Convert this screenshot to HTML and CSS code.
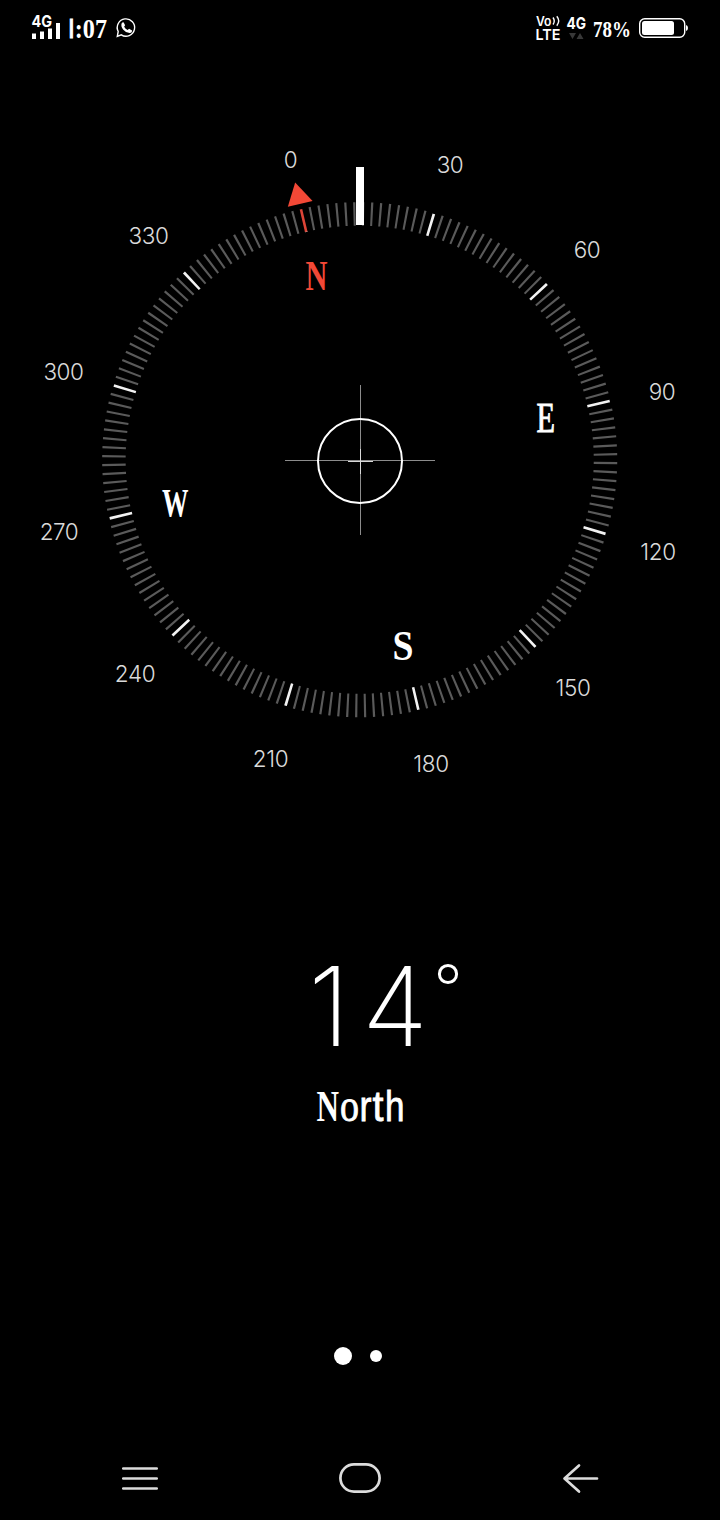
FILE: index.html
```html
<!DOCTYPE html>
<html lang="en">
<head>
<meta charset="utf-8">
<title>Compass</title>
<link rel="stylesheet" href="styles.css">
</head>
<body>
<div class="screen">
  <header class="status">
    <svg class="status-left" width="130" height="50" viewBox="20 0 130 50">
      <text class="net" x="31.500" y="27" textLength="20.500" lengthAdjust="spacingAndGlyphs">4G</text>
      <path class="solid" d="M32 33.500h4V39h-4zM40 31.500h4V39h-4zM48 28.500h4V39h-4zM56 23h4V39h-4z"/>
      <text class="clock" x="68" y="38" textLength="39" lengthAdjust="spacingAndGlyphs"><tspan class="clock-one">I</tspan>:07</text>
      <path class="thin" d="M118.200 31.500A8.700 8.700 0 1 1 121.300 34.900L117.300 36.400Z"/>
      <path class="solid" d="M121.700 23.200q1-1.300 2-.7l1.400 2.800-1 1.500q1.300 2.200 3.500 3.200l1.500-1.300 3 1.700q.2 2-2 2.600-3.700.3-6.800-3.300-2.800-3.300-1.600-6.500Z"/>
    </svg>
    <svg class="status-right" width="190" height="50" viewBox="520 0 190 50">
      <text class="volte" x="536" y="25.500" font-size="13" textLength="15.500" lengthAdjust="spacingAndGlyphs">Vo</text>
      <path class="wave" d="M553 17.500q2.500 3.500 0 7M556.800 16.300q3.800 4.700 0 9.400"/>
      <text class="volte" x="535.500" y="39.500" font-size="15" textLength="25" lengthAdjust="spacingAndGlyphs">LTE</text>
      <text class="net" x="566.500" y="29" textLength="19.500" lengthAdjust="spacingAndGlyphs">4G</text>
      <path class="dim" d="M569 33h7l-3.500 6zM576.500 39h7l-3.500-6z"/>
      <text class="battery-text" x="593" y="37" textLength="38" lengthAdjust="spacingAndGlyphs">78%</text>
      <rect class="outline" x="639.700" y="18.700" width="45" height="18.600" rx="5"/>
      <rect class="solid" x="642" y="21" width="32" height="14" rx="2.500"/>
      <path class="solid" d="M686 25q2 .5 2 3t-2 3z"/>
    </svg>
  </header>
  <main class="main">
    <svg class="dial" width="720" height="720" viewBox="0 100 720 720">
      <g transform="rotate(-13.200 359.700 459.700)">
        <g transform="rotate(-90 359.700 459.700)">
          <circle class="minor" cx="359.700" cy="459.700" r="245.800" pathLength="180"/>
          <circle class="major-gap" cx="359.700" cy="459.700" r="245.800" pathLength="12"/>
          <circle class="major" cx="359.700" cy="459.700" r="245.300" pathLength="12"/>
        </g>
        <path class="north-gap" d="M359.700 201v24"/>
        <path class="north-tick" d="M359.700 202.500v23"/>
        <path class="red" d="M360.200 175l12.700 22h-25.400z"/>
      </g>
      <rect class="solid" x="356" y="167" width="8" height="58"/>
      <g class="degrees">
        <text x="290.500" y="168">0</text><text x="450" y="173">30</text>
        <text x="587" y="258">60</text><text x="662" y="400">90</text>
        <text x="658" y="560">120</text><text x="573" y="696">150</text>
        <text x="431" y="772">180</text><text x="270.500" y="767">210</text>
        <text x="135" y="682">240</text><text x="59" y="540">270</text>
        <text x="63.500" y="380">300</text><text x="148.500" y="244">330</text>
      </g>
      <g class="cardinals">
        <text class="red" x="305.500" y="290" textLength="22" lengthAdjust="spacingAndGlyphs">N</text>
        <text class="light" x="536.500" y="432" textLength="18.500" lengthAdjust="spacingAndGlyphs">E</text>
        <text x="392.500" y="660" textLength="21" lengthAdjust="spacingAndGlyphs">S</text>
        <text x="162" y="516" font-size="40" textLength="26.500" lengthAdjust="spacingAndGlyphs">W</text>
      </g>
      <path class="cross" d="M285 460.500h150M360.500 385v150"/>
      <path class="cross-center" d="M348 461.500h25M360.500 449v25"/>
      <circle class="ring" cx="360" cy="461" r="42"/>
    </svg>
    <svg class="reading" width="720" height="220" viewBox="0 930 720 220">
      <text class="value" x="308" y="1045.500">1</text>
      <text class="value" x="362" y="1045.500" textLength="66" lengthAdjust="spacingAndGlyphs">4</text>
      <circle class="degree" cx="448" cy="974" r="8.600"/>
      <g class="heading">
        <text class="serif" x="316.500" y="1121" font-size="45" textLength="22.500" lengthAdjust="spacingAndGlyphs">N</text>
        <text class="serif round" x="340" y="1121" textLength="19" lengthAdjust="spacingAndGlyphs">o</text>
        <text x="359.500" y="1121" textLength="12" lengthAdjust="spacingAndGlyphs">r</text>
        <text x="372.500" y="1121" textLength="11" lengthAdjust="spacingAndGlyphs">t</text>
        <text x="385" y="1121" textLength="19.500" lengthAdjust="spacingAndGlyphs">h</text>
      </g>
    </svg>
    <div class="pager"><span class="dot active"></span><span class="dot"></span></div>
  </main>
  <nav class="nav">
    <svg width="44" height="36" viewBox="118 1460 44 36"><path d="M123.300 1468.500h33.400M123.300 1478.500h33.400M123.300 1488.500h33.400"/></svg>
    <svg width="44" height="36" viewBox="338 1460 44 36"><rect x="340.400" y="1464.400" width="39.200" height="27.200" rx="13.600"/></svg>
    <svg width="44" height="36" viewBox="558 1460 44 36"><path d="M579 1465.500l-14.500 13 14.500 13M565 1478.500h32"/></svg>
  </nav>
</div>
</body>
</html>
```
FILE: styles.css
```css
body {
  margin: 0;
  background: #000;
}
.screen {
  display: flex;
  flex-direction: column;
  width: 720px;
  height: 1520px;
  background: #000;
  color: #fff;
}
svg { display: block; }
text { fill: #fff; }
.solid { fill: #fff; }
.status {
  display: flex;
  justify-content: space-between;
  height: 50px;
  padding: 0 10px 50px 20px;
}
.net { font: 700 16px "Inter", "Liberation Sans", sans-serif; }
.volte { font-family: "Inter", "Liberation Sans", sans-serif; font-weight: 600; }
.clock { font: 700 28px "Liberation Serif", serif; }
.clock-one { font-family: "Liberation Sans", sans-serif; font-weight: 400; stroke: #fff; stroke-width: 1; }
.battery-text { font: 700 23px "Liberation Serif", serif; }
.thin, .wave { fill: none; stroke: #fff; stroke-width: 1.4; }
.outline { fill: none; stroke: #fff; stroke-width: 1.4; }
.dim { fill: #383838; }
.main {
  display: flex;
  flex-direction: column;
  height: 1340px;
}
.reading { margin-top: 110px; }
.minor, .major, .major-gap { fill: none; stroke-width: 23.5; }
.minor {
  stroke: #5a5a5a;
  stroke-dasharray: .25 .75;
  stroke-dashoffset: .125;
}
.major-gap {
  stroke: #000;
  stroke-dasharray: .03 .97;
  stroke-dashoffset: .015;
  stroke-width: 25;
}
.major {
  stroke: #f2f2f2;
  stroke-width: 23;
  stroke-dasharray: .0205 .9795;
  stroke-dashoffset: .01025;
}
.north-gap { stroke: #000; stroke-width: 5; }
.north-tick { stroke: #dc4437; stroke-width: 2.6; }
.red, .cardinals .red { fill: #f24836; }
.degrees text {
  font: 300 22.5px "Inter", "Liberation Sans", sans-serif;
  letter-spacing: -.4px;
  fill: #dadada;
  text-anchor: middle;
}
.cardinals { font-family: "Liberation Serif", serif; font-weight: 700; font-size: 43px; }
.cardinals .light { font-weight: 400; stroke: #fff; stroke-width: 1; }
.cross { stroke: #8c8c8c; stroke-width: 1; }
.cross-center { stroke: #d8d8d8; stroke-width: 1; }
.ring { fill: none; stroke: #fff; stroke-width: 2; }
.value { font: 200 110.5px "Inter", "Liberation Sans", sans-serif; }
.degree { fill: none; stroke: #fff; stroke-width: 3; }
.heading { font: 400 43px "Liberation Sans", sans-serif; stroke: #fff; stroke-width: .8; }
.heading .serif { font-family: "Liberation Serif", serif; font-weight: 700; stroke: none; }
.heading .round { font-weight: 400; font-size: 46px; stroke: #fff; stroke-width: .8; }
.pager {
  display: flex;
  align-items: center;
  justify-content: center;
  gap: 18px;
  height: 20px;
  margin-top: 196px;
  padding-right: 4px;
}
.dot {
  width: 12px;
  height: 12px;
  border-radius: 50%;
  background: #fff;
}
.dot.active { width: 18px; height: 18px; }
.nav {
  display: flex;
  justify-content: space-between;
  padding: 20px 118px 24px;
}
.nav svg {
  fill: none;
  stroke: #dcdcdc;
  stroke-width: 2.7;
  stroke-linecap: round;
  stroke-linejoin: round;
}
```
